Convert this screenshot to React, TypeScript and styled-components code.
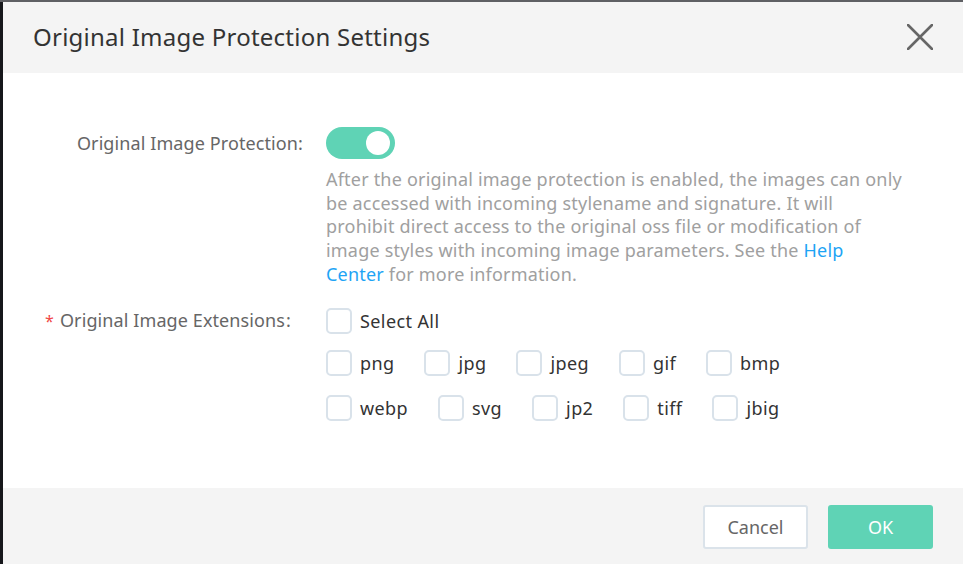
import React from "react";
import styled, { createGlobalStyle } from "styled-components";

const GlobalStyle = createGlobalStyle`
  html, body { margin: 0; padding: 0; }
  body {
    width: 963px;
    height: 564px;
    overflow: hidden;
    background: #16171b;
    font-family: "Noto Sans", "Open Sans", Arial, sans-serif;
  }
`;

const Backdrop = styled.div`
  box-sizing: border-box;
  width: 963px;
  height: 564px;
  border-top: 2px solid #5f6064;
  padding-left: 3px;
  display: flex;
`;

const Modal = styled.div`
  flex: 1;
  display: flex;
  flex-direction: column;
  background: #ffffff;
`;

const Header = styled.div`
  height: 71px;
  box-sizing: border-box;
  background: #f4f4f4;
  display: flex;
  align-items: center;
  justify-content: space-between;
  padding: 0 30px 2px;
`;

const Title = styled.h2`
  margin: 0;
  font-size: 24px;
  font-weight: 400;
  color: #333;
  letter-spacing: 0.24px;
`;

const CloseButton = styled.button`
  border: none;
  background: none;
  padding: 0;
  width: 26px;
  height: 26px;
  display: flex;
  cursor: pointer;
`;

const Body = styled.div`
  flex: 1;
  padding: 54px 59px 0 0;
  display: grid;
  grid-template-columns: 300px 1fr;
  column-gap: 23px;
  align-content: start;
`;

const Label = styled.div<{ $top: number }>`
  font-size: 18px;
  color: #666;
  text-align: right;
  padding-top: ${(p) => p.$top}px;
  line-height: 24px;
  letter-spacing: 0.1px;
`;

const Required = styled.span`
  color: #f04848;
  margin-right: 6px;
  font-size: 16px;
`;

const Colon = styled.span`
  display: inline-block;
  width: 18px;
  padding-left: 1px;
  box-sizing: border-box;
  text-align: left;
`;

const Control = styled.div`
  display: flex;
  flex-direction: column;
`;

const Switch = styled.div`
  width: 69px;
  height: 32px;
  border-radius: 16px;
  background: #5fd3b5;
  display: flex;
  align-items: center;
  justify-content: flex-end;
  padding: 0 5px;
  box-sizing: border-box;
`;

const Knob = styled.div`
  width: 24px;
  height: 24px;
  border-radius: 50%;
  background: #fff;
`;

const Description = styled.p`
  margin: 9px 0 21px;
  font-size: 18px;
  line-height: 23.7px;
  letter-spacing: 0.2px;
  color: #a0a0a0;
`;

const Link = styled.a`
  color: #1ea4f5;
  text-decoration: none;
`;

const CheckRow = styled.div<{ $mb: number }>`
  display: flex;
  margin-bottom: ${(p) => p.$mb}px;
`;

const CheckItem = styled.label`
  display: flex;
  align-items: center;
  margin-right: 30px;
  font-size: 18px;
  letter-spacing: 0.4px;
  color: #333;
  cursor: pointer;
`;

const Box = styled.span`
  width: 26px;
  height: 26px;
  box-sizing: border-box;
  border: 2px solid #d9e2ea;
  border-radius: 5px;
  margin-right: 8px;
  background: #fff;
`;

const Footer = styled.div`
  height: 76px;
  box-sizing: border-box;
  background: #f4f4f4;
  display: flex;
  justify-content: flex-end;
  align-items: flex-start;
  padding: 17px 30px 0 0;
  gap: 20px;
`;

const Button = styled.button<{ $primary?: boolean }>`
  width: 105px;
  height: 44px;
  box-sizing: border-box;
  border-radius: 3px;
  font-family: inherit;
  font-size: 18px;
  cursor: pointer;
  border: ${(p) => (p.$primary ? "none" : "2px solid #dbe3ea")};
  background: ${(p) => (p.$primary ? "#5fd3b5" : "#fff")};
  color: ${(p) => (p.$primary ? "#fff" : "#666")};
`;

const rows = [
  ["png", "jpg", "jpeg", "gif", "bmp"],
  ["webp", "svg", "jp2", "tiff", "jbig"],
];

export default function App() {
  return (
    <>
      <GlobalStyle />
      <Backdrop>
        <Modal>
          <Header>
            <Title>Original Image Protection Settings</Title>
            <CloseButton aria-label="close">
              <svg width="26" height="26" viewBox="0 0 26 26">
                <path d="M1 1 L25 25 M25 1 L1 25" stroke="#666" strokeWidth="2.6" strokeLinecap="round" />
              </svg>
            </CloseButton>
          </Header>
          <Body>
            <Label $top={4}>Original Image Protection:</Label>
            <Control>
              <Switch>
                <Knob />
              </Switch>
              <Description>
                After the original image protection is enabled, the images can only be accessed with incoming stylename and signature. It will prohibit direct access to the original oss file or modification of image styles with incoming image parameters. See the <Link href="#">Help Center</Link> for more information.
              </Description>
            </Control>
            <Label $top={0}>
              <Required>*</Required>Original Image Extensions<Colon>:</Colon>
            </Label>
            <Control>
              <CheckRow $mb={16}>
                <CheckItem>
                  <Box />
                  Select All
                </CheckItem>
              </CheckRow>
              {rows.map((r, i) => (
                <CheckRow key={i} $mb={i === 0 ? 19 : 0}>
                  {r.map((ext) => (
                    <CheckItem key={ext}>
                      <Box />
                      {ext}
                    </CheckItem>
                  ))}
                </CheckRow>
              ))}
            </Control>
          </Body>
          <Footer>
            <Button>Cancel</Button>
            <Button $primary>OK</Button>
          </Footer>
        </Modal>
      </Backdrop>
    </>
  );
}
